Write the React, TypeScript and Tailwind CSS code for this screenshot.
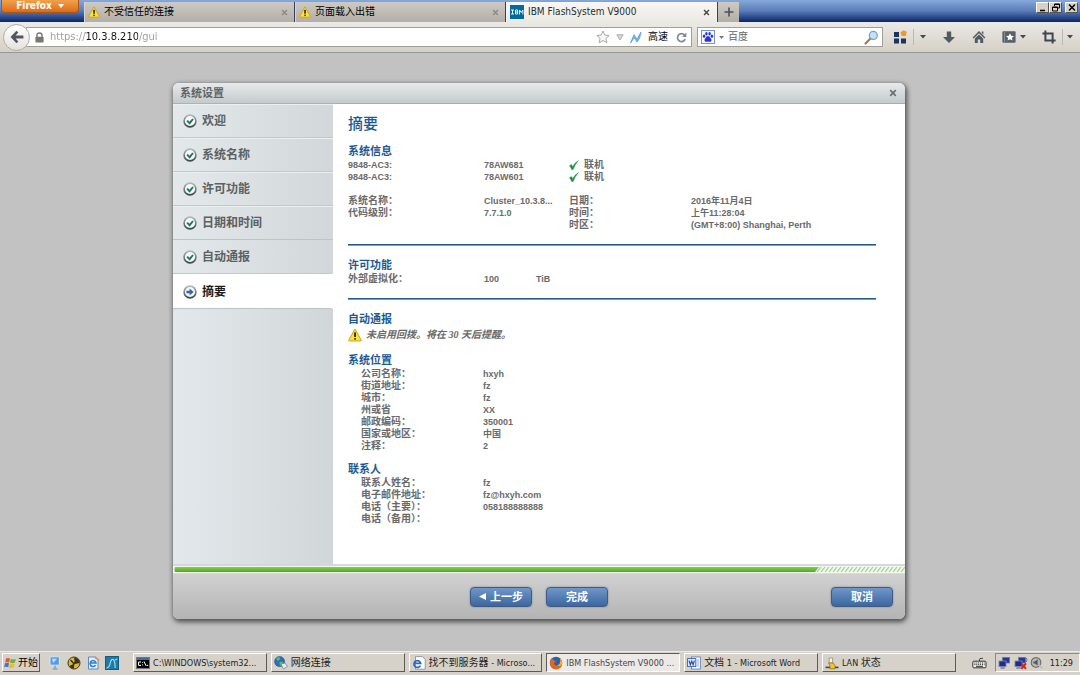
import type { ReactNode } from 'react';

const uiFont = "font-['DejaVu_Sans_Condensed','Noto_Sans_CJK_SC',sans-serif]";
const dialogFont = "font-['Liberation_Sans','Noto_Sans_CJK_SC',sans-serif]";

/* ---------- icons ---------- */

function WarningIcon({ className }: { className: string }) {
  return (
    <svg viewBox="0 0 14 14" className={className} aria-hidden="true">
      <path d="M7 1 L13.3 12.2 Q13.5 13 12.6 13 H1.4 Q0.5 13 0.7 12.2 Z" fill="#fde23a" stroke="#c9941c" strokeWidth="0.9" strokeLinejoin="round" />
      <rect x="6.2" y="4.3" width="1.7" height="4.7" rx="0.6" fill="#1c1c1c" />
      <rect x="6.2" y="10" width="1.7" height="1.7" rx="0.6" fill="#1c1c1c" />
    </svg>
  );
}

function StepIcon({ current }: { current?: boolean }) {
  return (
    <svg viewBox="0 0 14 14" className="size-3.5 shrink-0" aria-hidden="true">
      <defs>
        <linearGradient id="ring" x1="0" y1="0" x2="0" y2="1">
          <stop offset="0" stopColor="#b4b8ba" />
          <stop offset="1" stopColor="#41474a" />
        </linearGradient>
      </defs>
      <circle cx="7" cy="7" r="5.9" fill="#f4f7f7" stroke="url(#ring)" strokeWidth="1.6" />
      {current ? (
        <path d="M3.4 5.8 H6.6 V3.6 L10.6 7 L6.6 10.4 V8.2 H3.4 Z" fill="#3565a8" />
      ) : (
        <path d="M4.1 6.6 L6.6 9.2 L10 5" fill="none" stroke="#1c7a58" strokeWidth="1.9" />
      )}
    </svg>
  );
}

function CheckMark() {
  return (
    <svg viewBox="0 0 10 10" className="size-2.5 shrink-0" aria-hidden="true">
      <path d="M0.4 5.8 L2.4 4.6 L3.7 6.4 Q5.8 2.8 9.4 0.6 Q5.9 4.8 4 9.8 H2.8 Q1.8 7.2 0.4 5.8 Z" fill="#1f9447" stroke="#1f9447" strokeWidth="0.4" />
    </svg>
  );
}

function Caret() {
  return (
    <svg viewBox="0 0 6 4" className="h-1 w-1.5" aria-hidden="true">
      <path d="M0 0 H6 L3 3.6 Z" fill="#444a50" />
    </svg>
  );
}

function CloseGlyph({ className }: { className: string }) {
  return (
    <svg viewBox="0 0 8 8" className={className} aria-hidden="true">
      <path d="M1.2 1.2 L6.8 6.8 M6.8 1.2 L1.2 6.8" stroke="currentColor" strokeWidth="1.7" fill="none" />
    </svg>
  );
}

function IbmIcon() {
  return (
    <svg viewBox="0 0 14 14" className="size-3.5 shrink-0" aria-hidden="true">
      <rect width="14" height="14" fill="#04699b" />
      <g stroke="#e6f4fb" strokeWidth="1" fill="none">
        <path d="M1 5 H4 M1 9 H4 M2.5 5 V9" />
        <path d="M5.5 5 V9 H7.6 V5 Z M5.5 7 H7.6" />
        <path d="M9.5 9.5 V5 L11.2 7.5 L12.9 5 V9.5" />
      </g>
    </svg>
  );
}

/* ---------- browser chrome ---------- */

function BrowserTab({ icon, label, active }: { icon: ReactNode; label: string; active?: boolean }) {
  return (
    <div
      role="tab"
      aria-selected={!!active}
      className={
        'flex h-5 w-[211px] items-center gap-1 border-x pr-1.5 pl-[3px] text-[10px] leading-4 ' +
        (active
          ? 'border-[#f4f3ef] bg-gradient-to-b from-[#f8f7f4] to-[#ebe9e4] text-[#2a2d31]'
          : 'border-r-[#3a3f55] border-l-[#d8d5cd] bg-gradient-to-b from-[#cdcac3] to-[#b3afa8] text-black')
      }
    >
      {icon}
      <span className="grow truncate">{label}</span>
      <button aria-label="关闭标签页" className={active ? 'text-[#4a4a4a]' : 'text-[#8c8a86]'}>
        <CloseGlyph className="size-[7px]" />
      </button>
    </div>
  );
}

function WindowButton({ label, children }: { label: string; children: ReactNode }) {
  return (
    <button
      aria-label={label}
      className="flex h-[11px] w-[13px] items-center justify-center border border-t-white border-r-[#55534e] border-b-[#55534e] border-l-white bg-[#d6d2c9]"
    >
      <svg viewBox="0 0 10 9" className="h-[9px] w-2.5" fill="none" stroke="#000" aria-hidden="true">
        {children}
      </svg>
    </button>
  );
}

function TitleBar() {
  return (
    <header className="flex h-[22px] items-start bg-gradient-to-b from-[#86a9dc] via-[#5b7cb8] to-[#0d2468]">
      <button className="ml-px flex h-[13px] w-[78px] items-center justify-center gap-1.5 rounded-b-sm border border-t-0 border-[#a8571a] bg-gradient-to-b from-[#f0a24a] to-[#dd6a12] text-[10px] leading-3 font-bold text-white">
        Firefox
        <svg viewBox="0 0 6 4" className="h-1 w-1.5" aria-hidden="true">
          <path d="M0 0 H6 L3 4 Z" fill="#fff" />
        </svg>
      </button>
      <div role="tablist" className="mt-0.5 ml-[5px] flex">
        <BrowserTab icon={<WarningIcon className="size-3 shrink-0" />} label="不受信任的连接" />
        <BrowserTab icon={<WarningIcon className="size-3 shrink-0" />} label="页面载入出错" />
        <BrowserTab icon={<IbmIcon />} label="IBM FlashSystem V9000" active />
      </div>
      <button aria-label="新建标签页" className="mt-0.5 flex h-5 w-[22px] items-center justify-center border-l border-[#3a3f55] bg-gradient-to-b from-[#cdcac3] to-[#b3afa8]">
        <svg viewBox="0 0 10 10" className="size-2.5" aria-hidden="true">
          <path d="M5 0.5 V9.5 M0.5 5 H9.5" stroke="#4b5258" strokeWidth="1.6" />
        </svg>
      </button>
      <div className="mt-0.5 mr-0.5 ml-auto flex">
        <WindowButton label="最小化">
          <path d="M2 7.5 H7" strokeWidth="1.6" />
        </WindowButton>
        <WindowButton label="还原">
          <path d="M3.5 3 V1 H8.5 V5 H7 M3.5 1.4 H8.5 M1.5 4 H6.5 V8 H1.5 Z M1.5 4.4 H6.5" />
        </WindowButton>
        <span className="w-[3px]" />
        <WindowButton label="关闭">
          <path d="M2 1.5 L8 7.5 M8 1.5 L2 7.5" strokeWidth="1.5" />
        </WindowButton>
      </div>
    </header>
  );
}

function Toolbar() {
  return (
    <div className="flex h-[31px] items-center border-b border-[#9a9892] bg-gradient-to-b from-[#eceae6] to-[#d5d0c7] pr-[7px]">
      <button
        aria-label="后退"
        className="relative z-10 ml-[3px] flex size-[27px] shrink-0 items-center justify-center rounded-full border border-[#b0aea9] bg-gradient-to-b from-white to-[#e4e2dd]"
      >
        <svg viewBox="0 0 14 14" className="size-3.5" aria-hidden="true">
          <path d="M0.5 7 L6.5 0.8 L8.3 2.5 L5.6 5.4 H13.4 V8.6 H5.6 L8.3 11.5 L6.5 13.2 Z" fill="#4d5860" />
        </svg>
      </button>
      <div className="-ml-1 flex h-5 min-w-0 grow items-center border border-[#a19f9a] bg-white pr-1 pl-2">
        <svg viewBox="0 0 9 11" className="h-[11px] w-[9px] shrink-0" aria-hidden="true">
          <path d="M2 5 V3.4 Q2 1 4.5 1 Q7 1 7 3.4 V5" fill="none" stroke="#777" strokeWidth="1.4" />
          <rect x="0.4" y="4.8" width="8.2" height="5.8" rx="0.8" fill="#777" />
        </svg>
        <input
          aria-label="地址"
          defaultValue="https://10.3.8.210/gui"
          className="ml-1.5 min-w-0 grow bg-[linear-gradient(90deg,#9a9a9a_35px,#111_35px,#111_88px,#9a9a9a_88px)] bg-clip-text text-[11px] leading-4 text-transparent outline-none"
        />
        <button aria-label="收藏此页">
          <svg viewBox="0 0 14 14" className="size-3.5" aria-hidden="true">
            <path d="M7 1 L8.8 5.1 L13.2 5.5 L9.9 8.4 L10.9 12.8 L7 10.5 L3.1 12.8 L4.1 8.4 L0.8 5.5 L5.2 5.1 Z" fill="#fafafa" stroke="#a8a8a8" />
          </svg>
        </button>
        <button aria-label="历史记录" className="ml-1.5">
          <svg viewBox="0 0 8 7" className="h-[7px] w-2" aria-hidden="true">
            <path d="M0.8 0.8 H7.2 L4 6 Z" fill="#d8d8d8" stroke="#adadad" />
          </svg>
        </button>
        <button className="ml-1.5 flex items-center gap-1.5 text-[10px] leading-4 text-black">
          <svg viewBox="0 0 12 13" className="h-[13px] w-3" aria-hidden="true">
            <path d="M0.5 12 L4 3.5 L7 8.3 L11 1 L9.5 7.5 L7 11 L4.2 6.8 Z" fill="#7db9ee" stroke="#4d94d8" strokeWidth="0.7" />
          </svg>
          高速
        </button>
        <button aria-label="刷新" className="ml-2">
          <svg viewBox="0 0 11 11" className="size-[11px]" aria-hidden="true">
            <path d="M8.6 3 A4 4 0 1 0 9.2 7.2" fill="none" stroke="#7f8a90" strokeWidth="1.7" />
            <path d="M10.4 0.6 V5 H6 Z" fill="#7f8a90" />
          </svg>
        </button>
      </div>
      <form className="ml-[5px] flex h-5 w-[186px] shrink-0 items-center border border-[#a19f9a] bg-white px-[3px]">
        <button type="button" aria-label="选择搜索引擎" className="flex items-center gap-1">
          <svg viewBox="0 0 14 14" className="size-3.5" aria-hidden="true">
            <rect x="0.5" y="0.5" width="13" height="13" fill="#f4f8ff" stroke="#7d93c8" />
            <g fill="#2632d2">
              <ellipse cx="3.1" cy="6.2" rx="1.2" ry="1.6" />
              <ellipse cx="5.4" cy="3.7" rx="1.2" ry="1.7" />
              <ellipse cx="8.6" cy="3.7" rx="1.2" ry="1.7" />
              <ellipse cx="10.9" cy="6.2" rx="1.2" ry="1.6" />
              <path d="M7 6 Q8.4 6 9.2 7.8 Q11 9.2 10.4 10.9 Q9.6 12.2 7 11.6 Q4.4 12.2 3.6 10.9 Q3 9.2 4.8 7.8 Q5.6 6 7 6 Z" />
            </g>
          </svg>
          <svg viewBox="0 0 5 3" className="h-[3px] w-[5px]" aria-hidden="true">
            <path d="M0 0 H5 L2.5 3 Z" fill="#777" />
          </svg>
        </button>
        <input aria-label="搜索" placeholder="百度" className="ml-1 min-w-0 grow text-[10px] leading-4 outline-none placeholder:text-[#666]" />
        <button type="button" aria-label="搜索">
          <svg viewBox="0 0 15 15" className="size-[15px]" aria-hidden="true">
            <path d="M1.5 13.5 L6 9" stroke="#b5714a" strokeWidth="2.2" strokeLinecap="round" />
            <circle cx="9.3" cy="5.4" r="4" fill="#c2e3fa" stroke="#7ba0c4" strokeWidth="1.2" />
          </svg>
        </button>
      </form>
      <nav className="flex h-full shrink-0 items-center">
        <button aria-label="应用" className="ml-2.5">
          <svg viewBox="0 0 14 14" className="size-3.5" aria-hidden="true">
            <path d="M1 2 H6 V7 H1 Z M1 8.5 H6 V13.5 H1 Z M8 8.5 H13 V13.5 H8 Z" fill="#1b355f" />
            <path d="M10.4 0.2 L13.8 1.8 L12.8 6 L8.6 6 L7.4 2.6 Z" fill="#f39a1e" />
          </svg>
        </button>
        <span className="ml-1.5 h-4 w-px bg-[#bcb9b2]" />
        <button aria-label="更多应用" className="ml-1.5"><Caret /></button>
        <button aria-label="下载" className="ml-4">
          <svg viewBox="0 0 14 14" className="size-3.5" aria-hidden="true">
            <path d="M4.8 1.5 H9.2 V7 H13 L7 13 L1 7 H4.8 Z" fill="#4f5b64" />
          </svg>
        </button>
        <button aria-label="主页" className="ml-4">
          <svg viewBox="0 0 14 14" className="size-3.5" aria-hidden="true">
            <path d="M7 1 L13.4 7.4 L12.4 8.4 L7 3.2 L1.6 8.4 L0.6 7.4 Z M9.8 1.6 H11.4 V4.4 L9.8 3 Z M2.8 8.6 L7 4.5 L11.2 8.6 V13 H8.2 V9.6 H5.8 V13 H2.8 Z" fill="#4f5b64" />
          </svg>
        </button>
        <button aria-label="书签" className="ml-4 flex items-center gap-1">
          <svg viewBox="0 0 14 14" className="size-3.5" aria-hidden="true">
            <path d="M1.4 1.2 H12.6 Q13.6 1.2 13.6 2.2 V11.8 Q13.6 12.8 12.6 12.8 H1.4 Q0.4 12.8 0.4 11.8 V2.2 Q0.4 1.2 1.4 1.2 Z" fill="#55616a" />
            <path d="M8 3.2 L9.2 5.8 L12 6 L9.9 7.9 L10.5 10.6 L8 9.2 L5.5 10.6 L6.1 7.9 L4 6 L6.8 5.8 Z" fill="#fff" />
            <path d="M2.6 2 V12" stroke="#8c969c" />
          </svg>
          <Caret />
        </button>
        <button aria-label="截图" className="ml-4">
          <svg viewBox="0 0 14 14" className="size-3.5" aria-hidden="true">
            <path d="M3.4 0.5 V10.4 H13.6 M0.4 3.4 H10.6 V13.5" fill="none" stroke="#3e474e" strokeWidth="2" />
          </svg>
        </button>
        <span className="ml-1.5 h-4 w-px bg-[#bcb9b2]" />
        <button aria-label="截图选项" className="ml-1"><Caret /></button>
      </nav>
    </div>
  );
}

/* ---------- wizard dialog ---------- */

const doneSteps = ['欢迎', '系统名称', '许可功能', '日期和时间', '自动通报'];

function Steps() {
  return (
    <ol className="flex w-[160px] shrink-0 flex-col text-[12px] leading-4 font-bold">
      {doneSteps.map((step, i) => (
        <li
          key={step}
          className={
            'h-[34px] border-b border-[#c3c7c9] bg-gradient-to-r from-[#e3e8ea] to-[#d2d7da] ' +
            (i === doneSteps.length - 1
              ? 'rounded-br shadow-[0_1px_2px_rgba(0,0,0,0.3)]'
              : 'shadow-[inset_0_1px_0_#eceff0,1px_0_1px_#c8cccd]')
          }
        >
          <a href="#" className="flex h-full items-center gap-[5px] pl-2.5 text-[#5b6062]">
            <StepIcon />
            {step}
          </a>
        </li>
      ))}
      <li className="h-[34px] bg-white">
        <a href="#" aria-current="step" className="flex h-full items-center gap-[5px] pt-0.5 pl-2.5 text-[#1c1c1c]">
          <StepIcon current />
          摘要
        </a>
      </li>
      <li aria-hidden="true" className="grow rounded-tr bg-gradient-to-r from-[#e3e8ec] to-[#d1d7d9] shadow-[inset_0_1px_1px_#c0c4c6,1px_0_1px_#c8cccd]" />
    </ol>
  );
}

function Heading({ children }: { children: ReactNode }) {
  return <h3 className="text-[11px] leading-4 font-bold text-[#1d5a94]">{children}</h3>;
}

function Divider() {
  return <hr className="mt-[13px] mb-[11px] h-0.5 border-t border-b border-t-[#27598e] border-b-[#6f9fce]" />;
}

const location: [string, string][] = [
  ['公司名称：', 'hxyh'],
  ['街道地址：', 'fz'],
  ['城市：', 'fz'],
  ['州或省', 'XX'],
  ['邮政编码：', '350001'],
  ['国家或地区：', '中国'],
  ['注释：', '2'],
];

const contact: [string, string][] = [
  ['联系人姓名：', 'fz'],
  ['电子邮件地址：', 'fz@hxyh.com'],
  ['电话（主要）：', '058188888888'],
  ['电话（备用）：', ''],
];

function Fields({ rows }: { rows: [string, string][] }) {
  return (
    <dl className="pl-[13px]">
      {rows.map(([label, value]) => (
        <div key={label} className="flex h-3">
          <dt className="w-[122px] text-[10px]">{label}</dt>
          <dd>{value}</dd>
        </div>
      ))}
    </dl>
  );
}

function Summary() {
  return (
    <section className="min-w-0 grow bg-white pt-2 pr-[29px] pb-[39px] pl-[15px] text-[9px] leading-3 font-bold text-[#6a6a6a]">
      <h2 className="mb-[7px] text-[15px] leading-6 font-medium text-[#1d5a94]">摘要</h2>

      <Heading>系统信息</Heading>
      <table className="w-full table-fixed">
        <tbody>
          {['78AW681', '78AW601'].map((serial) => (
            <tr key={serial} className="h-3">
              <td className="w-[136px]">9848-AC3:</td>
              <td className="w-[85px]">{serial}</td>
              <td>
                <span className="flex h-3 items-center gap-[5px] text-[10px]">
                  <CheckMark />
                  联机
                </span>
              </td>
            </tr>
          ))}
        </tbody>
      </table>
      <div className="mt-3 flex">
        <dl className="grid w-[221px] shrink-0 auto-rows-[12px] grid-cols-[136px_76px]">
          <dt className="text-[10px]">系统名称：</dt>
          <dd className="whitespace-nowrap">Cluster_10.3.8...</dd>
          <dt className="text-[10px]">代码级别：</dt>
          <dd>7.7.1.0</dd>
        </dl>
        <dl className="grid grow auto-rows-[12px] grid-cols-[122px_1fr]">
          <dt className="text-[10px]">日期：</dt>
          <dd>2016年11月4日</dd>
          <dt className="text-[10px]">时间：</dt>
          <dd>上午11:28:04</dd>
          <dt className="text-[10px]">时区：</dt>
          <dd>(GMT+8:00) Shanghai, Perth</dd>
        </dl>
      </div>

      <Divider />
      <Heading>许可功能</Heading>
      <dl className="flex h-3">
        <dt className="w-[136px] text-[10px]">外部虚拟化：</dt>
        <dd className="w-[52px]">100</dd>
        <dd>TiB</dd>
      </dl>

      <Divider />
      <Heading>自动通报</Heading>
      <p className="mb-[9px] flex h-4 items-center gap-1 font-['Liberation_Serif','Noto_Sans_CJK_SC',serif] text-[10px] italic">
        <WarningIcon className="size-3.5 shrink-0" />
        未启用回拨。将在 30 天后提醒。
      </p>

      <Heading>系统位置</Heading>
      <Fields rows={location} />

      <div className="mt-[9px]">
        <Heading>联系人</Heading>
        <Fields rows={contact} />
      </div>
    </section>
  );
}

function ActionButton({ children, className = '' }: { children: ReactNode; className?: string }) {
  return (
    <button
      className={
        'flex h-5 w-[62px] items-center justify-center gap-1 rounded-sm border border-[#3f5b85] bg-gradient-to-b from-[#6f97c9] to-[#3c679e] text-[11px] leading-4 font-bold text-white shadow-[0_0_2px_#7a7f88] ' +
        className
      }
    >
      {children}
    </button>
  );
}

function SetupDialog() {
  return (
    <div
      role="dialog"
      aria-labelledby="dialog-title"
      className={'mx-auto w-full max-w-[732px] overflow-hidden rounded-md bg-white shadow-[1px_2px_5px_1px_rgba(0,0,0,0.6)] ' + dialogFont}
    >
      <div className="flex h-[21px] items-center justify-between border-b border-[#a9adaf] bg-gradient-to-b from-[#e6eaeb] to-[#c5cacc] pr-2 pl-[7px]">
        <h1 id="dialog-title" className="text-[11px] leading-4 font-bold text-[#5f6466]">系统设置</h1>
        <button aria-label="关闭" className="text-[#6c7073]">
          <CloseGlyph className="size-2" />
        </button>
      </div>
      <div className="flex">
        <Steps />
        <Summary />
      </div>
      <div
        role="progressbar"
        aria-label="设置进度"
        aria-valuenow={88}
        className="flex h-2.5 items-center border-t-2 border-b border-t-[#d5d9da] border-b-[#d9dcd9] bg-[#f2f5f0] pl-px"
      >
        <svg viewBox="0 0 731 5" preserveAspectRatio="none" className="h-[5px] w-full" aria-hidden="true">
          <defs>
            <linearGradient id="bar" x1="0" y1="0" x2="0" y2="1">
              <stop offset="0" stopColor="#84cf4c" />
              <stop offset="1" stopColor="#4cae1c" />
            </linearGradient>
            <pattern id="hatch" width="4" height="5" patternUnits="userSpaceOnUse">
              <path d="M-1 5 L3 0 M3 5 L7 0" stroke="#9fd48a" strokeWidth="1.2" />
            </pattern>
          </defs>
          <rect x="640" width="91" height="5" fill="url(#hatch)" />
          <path d="M1 0 H645 L641 5 H1 Q0 2.5 1 0 Z" fill="url(#bar)" />
        </svg>
      </div>
      <div className="relative flex h-[45px] items-center justify-center gap-3.5 bg-gradient-to-b from-[#d2d1d2] to-[#b4b4b4]">
        <ActionButton>
          <svg viewBox="0 0 7 7" className="size-[7px]" aria-hidden="true">
            <path d="M7 0 V7 L0 3.5 Z" fill="#fff" />
          </svg>
          上一步
        </ActionButton>
        <ActionButton>完成</ActionButton>
        <ActionButton className="absolute right-3">取消</ActionButton>
      </div>
    </div>
  );
}

/* ---------- taskbar ---------- */

const raised = 'border border-t-white border-r-[#5d5b56] border-b-[#5d5b56] border-l-white bg-[#d6d2c9]';
const pressed = 'border border-t-[#5d5b56] border-r-white border-b-white border-l-[#5d5b56] bg-[#ece9e6]';

function FirefoxIcon() {
  return (
    <svg viewBox="0 0 14 14" className="size-3.5 shrink-0" aria-hidden="true">
      <circle cx="7" cy="7" r="6.2" fill="#2d62a8" />
      <path d="M2 2.4 Q0 6 1.4 9.4 Q3.4 13.6 7.6 13.2 Q12.6 12.6 13.2 7.4 Q13.3 4 11 1.9 Q12 5 10.8 7.6 Q9 10.2 6.4 9.2 Q4.4 8.4 5 6.6 Q6.4 6.8 7 5.6 Q5 4.6 4.6 3.4 Q3 3.4 2 2.4 Z" fill="#e3661b" />
      <path d="M11 1.9 Q12 5 10.8 7.6 Q9.6 9.4 8 9.6 Q11.6 11 13.2 7.4 Q13.3 4 11 1.9 Z" fill="#f7b52e" />
    </svg>
  );
}

function CmdIcon() {
  return (
    <svg viewBox="0 0 14 12" className="h-3 w-3.5 shrink-0" aria-hidden="true">
      <rect x="0.5" y="0.5" width="13" height="11" fill="#000" stroke="#777" />
      <rect x="1" y="1" width="12" height="2" fill="#3a6ea5" />
      <path d="M5 5 H2.6 V8.4 H5 M6.6 5.2 V6 M6.6 7.4 V8.4 M8 4.5 L10 8.8 M10.6 8.4 H12.2" stroke="#fff" strokeWidth="1" fill="none" />
    </svg>
  );
}

function GlobeIcon() {
  return (
    <svg viewBox="0 0 14 14" className="size-3.5 shrink-0" aria-hidden="true">
      <circle cx="5.6" cy="5.6" r="5" fill="#2a6fc4" stroke="#1e4f92" strokeWidth="0.6" />
      <path d="M2.4 2 Q5 0.6 6.4 2 Q5.6 4.4 3.8 5 Q2.6 4 2.4 2 Z M5.4 6 Q9 5.2 9.6 7.4 Q8 9.8 6 9.6 Z" fill="#5ec15a" />
      <path d="M7 8 L11 7 L13.4 10.4 L9.4 13 Z" fill="#e9eef2" stroke="#6b7680" strokeWidth="0.7" />
    </svg>
  );
}

function IePageIcon() {
  return (
    <svg viewBox="0 0 14 14" className="size-3.5 shrink-0" aria-hidden="true">
      <path d="M3.5 0.6 H10.5 L13.2 3.4 V13.2 H3.5 Z" fill="#fff" stroke="#7d8894" strokeWidth="0.8" />
      <path d="M8.4 9.6 A3.4 3.4 0 1 1 8.7 7.4 H3" fill="none" stroke="#2767c5" strokeWidth="1.7" />
    </svg>
  );
}

function WordIcon() {
  return (
    <svg viewBox="0 0 14 14" className="size-3.5 shrink-0" aria-hidden="true">
      <rect x="4.5" y="1" width="8.8" height="12" fill="#fff" stroke="#5576b2" strokeWidth="0.8" />
      <path d="M9.5 4 H12 M9.5 6 H12 M9.5 8 H12 M9.5 10 H12" stroke="#7a98cc" strokeWidth="0.8" />
      <rect x="0.6" y="2.6" width="8.2" height="8" fill="#dfe9fa" stroke="#2a56a5" strokeWidth="0.8" />
      <path d="M2 4.6 L3.3 8.8 L4.7 5.2 L6.1 8.8 L7.4 4.6" fill="none" stroke="#2a56a5" strokeWidth="1.2" />
    </svg>
  );
}

function LanIcon() {
  return (
    <svg viewBox="0 0 14 14" className="size-3.5 shrink-0" aria-hidden="true">
      <path d="M0.5 11.4 H13.5" stroke="#454545" strokeWidth="1.6" />
      <path d="M4.2 2 H7.6 V7 H4.2 Z" fill="#f7f4e3" stroke="#8a8460" strokeWidth="0.7" />
      <path d="M3.6 7 H8.2 L10 9.6 V12.8 H5 V10 Z" fill="#f2c52c" stroke="#8a6a14" strokeWidth="0.7" />
    </svg>
  );
}

function NetIcon({ broken }: { broken?: boolean }) {
  return (
    <svg viewBox="0 0 14 14" className="size-3.5 shrink-0" aria-hidden="true">
      <rect x="4.6" y="1.4" width="7" height="5.6" fill="#2534a0" stroke="#707892" strokeWidth="0.8" />
      <rect x="1" y="5" width="7" height="5.6" fill="#1d2b96" stroke="#8189a4" strokeWidth="0.8" />
      <path d="M2.4 12 H6.8" stroke="#70767c" strokeWidth="1.3" />
      {broken && <path d="M7.4 7.4 L12 12.8 M12 7.4 L7.4 12.8" stroke="#d31b1b" strokeWidth="1.9" />}
      {broken && <path d="M12.4 2 Q13.6 4 12.4 6" stroke="#777" fill="none" />}
    </svg>
  );
}

function TaskButton({ icon, label, active }: { icon: ReactNode; label: ReactNode; active?: boolean }) {
  return (
    <button
      className={
        'flex h-[19px] min-w-0 flex-1 items-center gap-[3px] px-0.5 text-left text-[9px] leading-4 ' +
        (active ? pressed + ' text-[#4a4648]' : raised + ' text-[#1e1e1e]')
      }
    >
      {icon}
      <span className="truncate">{label}</span>
    </button>
  );
}

function Han({ children }: { children: string }) {
  return <span className="text-[10px]">{children}</span>;
}

function Taskbar() {
  return (
    <footer className="flex h-6 shrink-0 items-center border-t border-[#eceae5] bg-[#d6d2c9] pb-0.5 pl-0.5">
      <button className={'flex h-[19px] shrink-0 items-center gap-px px-px text-[10px] leading-4 text-black ' + raised}>
        <svg viewBox="0 0 13 12" className="h-3 w-[13px]" aria-hidden="true">
          <path d="M2 1.6 Q4 0.4 6 1.6 L5.2 5.4 Q3.2 4.4 1.2 5.4 Z" fill="#e8562a" />
          <path d="M6.8 1.8 Q9 3 11.8 1.8 L11 5.6 Q8.4 6.8 6 5.6 Z" fill="#6fb13a" />
          <path d="M1 6.3 Q3.2 5.3 5 6.3 L4.2 10.2 Q2.2 9.2 0.2 10.2 Z" fill="#3c78d2" />
          <path d="M5.8 6.5 Q8.2 7.7 10.8 6.5 L10 10.3 Q7.4 11.6 5 10.4 Z" fill="#f2bb2c" />
        </svg>
        开始
      </button>
      <div className="ml-2 flex w-[85px] shrink-0 items-center gap-[5px]">
        <button aria-label="显示桌面">
          <svg viewBox="0 0 14 14" className="size-3.5" aria-hidden="true">
            <rect x="2" y="0.8" width="9.4" height="8.4" rx="1" fill="#5a9be0" stroke="#dbe7f4" />
            <path d="M4.6 13 H9.6 M7 9.6 V12.6" stroke="#8fa2bc" strokeWidth="1.6" />
            <path d="M4 2.6 L9 3 L5 7 Z" fill="#b9dcfa" />
          </svg>
        </button>
        <button aria-label="安全工具">
          <svg viewBox="0 0 14 14" className="size-3.5" aria-hidden="true">
            <circle cx="7" cy="7" r="6" fill="#dcb92e" stroke="#3b3320" />
            <path d="M7 1.4 A5.6 5.6 0 0 1 12.6 7 L8 8 Z M7 12.6 A5.6 5.6 0 0 1 2.4 10 L6.4 8 Z" fill="#3b3320" />
            <path d="M3.6 4 L7 7.8 L10.4 3.4 M7 7.8 L6 11" stroke="#3b3320" strokeWidth="1.4" fill="none" />
          </svg>
        </button>
        <button aria-label="Internet Explorer">
          <svg viewBox="0 0 14 14" className="size-3.5" aria-hidden="true">
            <path d="M2.5 1 H9.5 L12 3.4 V13 H2.5 Z" fill="#e6f1fb" stroke="#4d83bb" strokeWidth="0.9" />
            <path d="M9.6 9.2 A3 3 0 1 1 10 7 H4.6" fill="none" stroke="#2f7fcf" strokeWidth="1.5" />
            <path d="M8.6 1.6 L13.4 4.2" stroke="#e0884a" strokeWidth="1.2" />
          </svg>
        </button>
        <button aria-label="监视器">
          <svg viewBox="0 0 14 14" className="size-3.5" aria-hidden="true">
            <rect x="0.5" y="0.5" width="13" height="13" fill="#1e7ba6" stroke="#155b80" />
            <path d="M1.5 12.2 Q4.6 11.6 5.4 6.4 Q6.2 2.6 8.2 3.4 Q9.6 4.2 10 8.4 L10.2 12 M10 4 L12.4 3" fill="none" stroke="#9ee0f5" strokeWidth="1.1" />
          </svg>
        </button>
      </div>
      <div className="flex min-w-0 grow items-center gap-1">
        <TaskButton icon={<CmdIcon />} label="C:\WINDOWS\system32..." />
        <TaskButton icon={<GlobeIcon />} label={<Han>网络连接</Han>} />
        <TaskButton icon={<IePageIcon />} label={<><Han>找不到服务器</Han> - Microso...</>} />
        <TaskButton icon={<FirefoxIcon />} label="IBM FlashSystem V9000 ..." active />
        <TaskButton icon={<WordIcon />} label={<><Han>文档</Han> 1 - Microsoft Word</>} />
        <TaskButton icon={<LanIcon />} label={<>LAN <Han>状态</Han></>} />
      </div>
      <button aria-label="输入法" className="ml-4 shrink-0">
        <svg viewBox="0 0 15 12" className="h-3 w-[15px]" aria-hidden="true">
          <path d="M7.5 4 V2.4 Q7.5 1.4 9 1.4 H11" fill="none" stroke="#333" strokeWidth="0.9" />
          <rect x="0.8" y="4.2" width="13.2" height="6.6" rx="1" fill="#efede8" stroke="#333" strokeWidth="1" />
          <path d="M2.4 6 H12.6 M2.4 7.6 H12.6" stroke="#333" strokeDasharray="1 0.9" />
          <path d="M4 9.3 H11" stroke="#333" />
        </svg>
      </button>
      <div className="ml-2 flex h-[19px] shrink-0 items-center gap-0.5 border border-t-[#8e8b84] border-r-white border-b-white border-l-[#8e8b84] pr-1.5 pl-0.5">
        <NetIcon />
        <NetIcon broken />
        <svg viewBox="0 0 14 14" className="size-3.5" aria-hidden="true">
          <circle cx="6" cy="6.4" r="4.8" fill="#b8b8b8" stroke="#6c6c6c" strokeWidth="1.1" />
          <path d="M3.4 5.4 H5 L7.6 3.2 V9.6 L5 7.6 H3.4 Z" fill="#555" />
          <path d="M9 9 L12.4 12.4" stroke="#b6bedc" strokeWidth="1.8" />
        </svg>
        <time className="ml-1 text-[9px] leading-4 text-[#222]">11:29</time>
      </div>
    </footer>
  );
}

export default function App() {
  return (
    <div className={'flex min-h-screen flex-col bg-[#c3c2c3] ' + uiFont}>
      <TitleBar />
      <Toolbar />
      <main className="grow pt-[30px] pr-[18px] pb-8 pl-4">
        <SetupDialog />
      </main>
      <Taskbar />
    </div>
  );
}
